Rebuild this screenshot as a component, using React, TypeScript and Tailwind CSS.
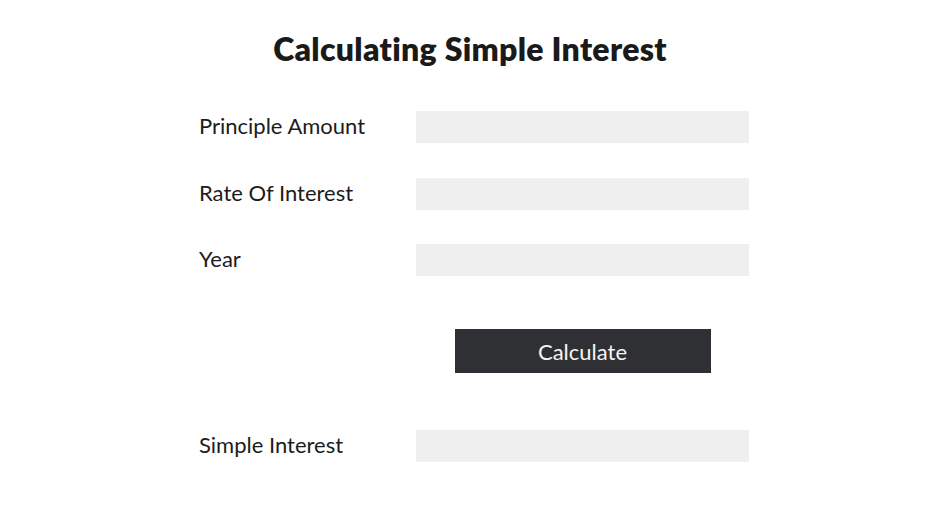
import { useState } from "react";

const FIELDS = [
  { name: "principal", label: "Principle Amount" },
  { name: "rate", label: "Rate Of Interest" },
  { name: "year", label: "Year" },
];

export default function App() {
  const [values, setValues] = useState<Record<string, string>>({
    principal: "",
    rate: "",
    year: "",
  });
  const [result, setResult] = useState("");

  const handleCalculate = () => {
    const p = parseFloat(values.principal);
    const r = parseFloat(values.rate);
    const t = parseFloat(values.year);
    if ([p, r, t].some((n) => isNaN(n))) {
      setResult("");
      return;
    }
    setResult(((p * r * t) / 100).toFixed(2));
  };

  return (
    <div className="w-[940px] h-[528px] bg-white font-['Lato','Inter',sans-serif] text-[#1c1c1c]">
      {/* Heading */}
      <h1 className="pt-[29px] text-center text-[32px] leading-[40px] font-extrabold tracking-[0.3px] text-[#1a1a1a]">
        Calculating Simple Interest
      </h1>

      <div className="w-[550px] ml-[199px] mt-[42px]">
        {/* Inputs */}
        <div className="flex flex-col gap-[34.5px]">
          {FIELDS.map((f) => (
            <div key={f.name} className="flex items-center">
              <label
                htmlFor={f.name}
                className="w-[217px] text-[22px] leading-none pb-[2px]"
              >
                {f.label}
              </label>
              <input
                id={f.name}
                type="text"
                value={values[f.name]}
                onChange={(e) =>
                  setValues({ ...values, [f.name]: e.target.value })
                }
                className="w-[333px] h-[32px] bg-[#efefef] px-3 text-[16px] outline-none"
              />
            </div>
          ))}
        </div>

        {/* Calculate button */}
        <div className="flex mt-[53px] pl-[217px]">
          <div className="w-[333px] flex justify-center">
            <button
              type="button"
              onClick={handleCalculate}
              className="w-[256px] h-[44px] bg-[#2f3033] text-[#f4f4f4] text-[22px] cursor-pointer"
            >
              Calculate
            </button>
          </div>
        </div>

        {/* Result */}
        <div className="flex items-center mt-[57px]">
          <label
            htmlFor="result"
            className="w-[217px] text-[22px] leading-none pb-[2px]"
          >
            Simple Interest
          </label>
          <input
            id="result"
            type="text"
            readOnly
            value={result}
            className="w-[333px] h-[32px] bg-[#efefef] px-3 text-[16px] outline-none"
          />
        </div>
      </div>
    </div>
  );
}
